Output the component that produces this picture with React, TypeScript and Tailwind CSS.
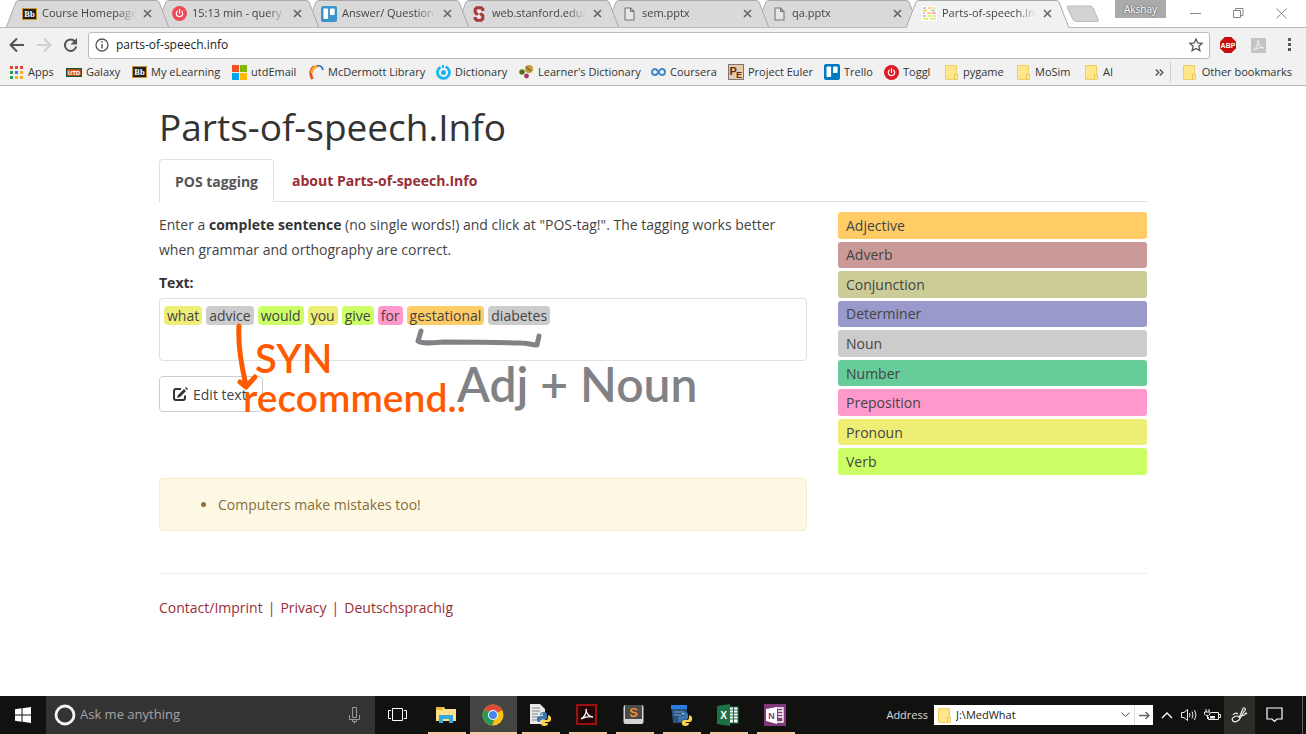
import type { ReactNode } from 'react';

type Fn = () => ReactNode;

/* ---------- Site icons ---------- */

const Blackboard: Fn = () => (
  <svg width="15" height="12" viewBox="0 0 15 12">
    <rect x="0.5" y="0.5" width="14" height="11" fill="#222" stroke="#c9952f" />
    <text x="7.5" y="9" fontSize="8.5" fontWeight="700" textAnchor="middle" fill="#fff" fontFamily="Liberation Serif, serif">Bb</text>
  </svg>
);

const Power = ({ color }: { color: string }) => (
  <svg width="15" height="15" viewBox="0 0 15 15">
    <circle cx="7.5" cy="7.5" r="7.5" fill={color} />
    <path d="M5.3 5.2a3.2 3.2 0 1 0 4.4 0M7.5 3.4v4" fill="none" stroke="#fff" strokeWidth="1.2" strokeLinecap="round" />
  </svg>
);
const TogglSoft: Fn = () => <Power color="#ea4b55" />;
const Toggl: Fn = () => <Power color="#e01b22" />;

const Board = ({ color }: { color: string }) => (
  <svg width="16" height="16" viewBox="0 0 16 16">
    <rect width="16" height="16" rx="2" fill={color} />
    <rect x="2.5" y="2.5" width="4.6" height="10.5" rx="0.8" fill="#fff" />
    <rect x="9" y="2.5" width="4.6" height="6.5" rx="0.8" fill="#fff" />
  </svg>
);
const TrelloSoft: Fn = () => <Board color="#3a95cf" />;
const Trello: Fn = () => <Board color="#0079bf" />;

const Stanford: Fn = () => (
  <svg width="12" height="16" viewBox="0 0 12 16">
    <path d="M9.8 5V3.2L8.3 1.8H3.7L2.2 3.2v3L3.8 8h4.4l1.6 1.6v3.2l-1.5 1.4H3.7l-1.5-1.4V11" fill="none" stroke="#a83a3a" strokeWidth="3" />
    <path d="M6 4v9M5 6.5h3M4 10h3" stroke="#fff" strokeWidth="0.9" />
  </svg>
);

const Page: Fn = () => (
  <svg width="11" height="14" viewBox="0 0 11 14">
    <path d="M1 1h5.5L10 4.5V13H1z M6.5 1v3.5H10" fill="#e6e6e6" stroke="#777" strokeWidth="1.1" />
  </svg>
);

const Pos: Fn = () => (
  <svg width="15" height="15" viewBox="0 0 15 15">
    <rect width="15" height="15" fill="#fff" />
    <path d="M1 2h3M9 4.5h4M1 7h2" stroke="#bbb" strokeWidth="1.6" />
    <path d="M6 2h4M1 4.5h4M5 7h4" stroke="#ffc24d" strokeWidth="1.6" />
    <path d="M11 2h3M6 10h4M1 12.8h5" stroke="#d3f04c" strokeWidth="1.6" />
    <path d="M10 7h4M1 10h3" stroke="#ff8fc4" strokeWidth="1.6" />
    <path d="M11 10h3M8 12.8h6" stroke="#e8e35e" strokeWidth="1.6" />
  </svg>
);

const Apps: Fn = () => (
  <svg width="13" height="13" viewBox="0 0 13 13">
    {['#e04434', '#e04434', '#e04434', '#2ba14b', '#3b7de0', '#f2b01e', '#2ba14b', '#f2b01e', '#f2b01e'].map((c, i) => (
      <rect key={i} x={(i % 3) * 5} y={Math.floor(i / 3) * 5} width="3" height="3" fill={c} />
    ))}
  </svg>
);

const Utd: Fn = () => (
  <svg width="16" height="9" viewBox="0 0 16 9">
    <rect x="0.5" y="0.5" width="15" height="8" rx="1" fill="#d9591f" stroke="#14502d" strokeWidth="1.500" />
    <text x="8" y="6.8" fontSize="6" fontWeight="700" textAnchor="middle" fill="#fff" fontFamily="Liberation Sans, sans-serif">UTD</text>
  </svg>
);

const Microsoft: Fn = () => (
  <svg width="15" height="15" viewBox="0 0 15 15">
    <path d="M0 0h7v7H0z" fill="#f25022" /><path d="M8 0h7v7H8z" fill="#7fba00" />
    <path d="M0 8h7v7H0z" fill="#00a4ef" /><path d="M8 8h7v7H8z" fill="#ffb900" />
  </svg>
);

const Arc: Fn = () => (
  <svg width="15" height="16" viewBox="0 0 15 16">
    <path d="M3.5 15C.2 10 1.500 5 5.300 2.500" fill="none" stroke="#ee4d23" strokeWidth="2.800" />
    <path d="M2.500 9C2.900 5 5.500 2.600 9 2" fill="none" stroke="#fba922" strokeWidth="2.600" />
    <path d="M8 2c3.500-.8 5.500 1.200 6 4" fill="none" stroke="#2d6fb5" strokeWidth="1.600" />
  </svg>
);

const Dictionary: Fn = () => (
  <svg width="15" height="15" viewBox="0 0 15 15">
    <path d="M9.500 1.800A6 6 0 1 1 4.500 2.200" fill="none" stroke="#19b5ee" strokeWidth="2.800" />
    <circle cx="7.500" cy="7.500" r="2.500" fill="#19b5ee" /><path d="M7 0v3" stroke="#19b5ee" strokeWidth="2" />
  </svg>
);

const Learner: Fn = () => (
  <svg width="15" height="14" viewBox="0 0 15 14">
    <circle cx="10" cy="4" r="4" fill="#c39a35" /><circle cx="3" cy="7" r="2.800" fill="#5d7d25" />
    <circle cx="7.500" cy="11" r="2.400" fill="#a23b62" /><path d="M7 2l5 4M1 7h4" stroke="#5a4413" />
  </svg>
);

const Coursera: Fn = () => (
  <svg width="15" height="10" viewBox="0 0 15 10">
    <path d="M7.500 5C6 2.500 5 2 4 2a3 3 0 0 0 0 6c1.500 0 2.500-1 3.500-3s2-3 3.500-3a3 3 0 0 1 0 6C9.800 8 8.800 7.400 7.500 5z" fill="none" stroke="#3f86c8" strokeWidth="1.900" />
  </svg>
);

const Euler: Fn = () => (
  <svg width="16" height="16" viewBox="0 0 16 16">
    <rect x="0.500" y="0.500" width="15" height="15" fill="#e9c9a7" stroke="#777" />
    <text x="1.500" y="10.500" fontSize="11" fontWeight="700" fill="#5b2f14" fontFamily="Liberation Sans, sans-serif">P</text>
    <text x="8" y="14" fontSize="9" fontWeight="700" fill="#5b2f14" fontFamily="Liberation Sans, sans-serif">E</text>
  </svg>
);

const Folder: Fn = () => (
  <svg width="13" height="15" viewBox="0 0 13 15">
    <path d="M.5.500h11v9h1v5H.500z" fill="#ffe58c" stroke="#f0ce62" />
    <path d="M9.500 14V9.500h2.500" fill="none" stroke="#eec254" />
  </svg>
);

/* ---------- Tab strip ---------- */

const tabs: { icon: Fn; title: string }[] = [
  { icon: Blackboard, title: 'Course Homepage' },
  { icon: TogglSoft, title: '15:13 min - query' },
  { icon: TrelloSoft, title: 'Answer/ Question' },
  { icon: Stanford, title: 'web.stanford.edu/' },
  { icon: Page, title: 'sem.pptx' },
  { icon: Page, title: 'qa.pptx' },
  { icon: Pos, title: 'Parts-of-speech.Info' },
];

const zOrder = ['z-[6]', 'z-[5]', 'z-[4]', 'z-[3]', 'z-[2]', 'z-[1]', 'z-10'];

function TabStrip() {
  return (
    <div className="isolate flex h-7 items-stretch border-b border-[#b9b9b9] bg-white pl-3">
      {tabs.map(({ icon: Icon, title }, i) => {
        const active = i === 6;
        return (
          <div key={title} className={`relative flex w-[150px] shrink-0 items-center pr-[10px] pl-[9px] ${zOrder[i]}`}>
            <svg className="absolute top-0 -left-[6px] -z-10" width="164" height="28" viewBox="0 0 164 28">
              <path d="M0 28L10 2Q11 .5 13 .5H150Q152 .5 153 2L163 28" fill={active ? '#f1f1f1' : '#d9d9d9'} stroke="#aaa" />
              {!active && <path d="M0 27.500H164" stroke="#b9b9b9" />}
            </svg>
            <button className="flex min-w-0 flex-1 items-center gap-[5px] text-left text-[11px] text-[#444]">
              <span className="flex w-4 shrink-0 justify-center"><Icon /></span>
              <span className="w-[94px] overflow-hidden whitespace-nowrap [mask-image:linear-gradient(to_right,#000_80%,transparent)]">{title}</span>
            </button>
            <button aria-label={`Close ${title}`} className="shrink-0">
              <svg width="9" height="9" viewBox="0 0 9 9"><path d="M1 1l7 7M8 1L1 8" stroke="#666" strokeWidth="1.600" /></svg>
            </button>
          </div>
        );
      })}
      <button aria-label="New tab" className="ml-1 flex items-center">
        <svg width="34" height="18" viewBox="0 0 34 18"><path d="M1 2Q1 1 2 1H24Q26 1 27 3L32 14Q33 16.500 31 16.500H10Q8 16.500 7 14.500z" fill="#d2d2d2" stroke="#bbb" /></svg>
      </button>
      <div className="ml-auto flex items-start">
        <div className="mr-6 flex h-[18px] w-[51px] items-center justify-center bg-[#aaa] text-[10px] text-white [text-shadow:0_0_2px_#333]">Akshay</div>
        <button aria-label="Minimize" className="mt-2 mr-8"><svg width="11" height="10"><path d="M0 5.500h11" stroke="#888" /></svg></button>
        <button aria-label="Restore" className="mt-2 mr-8">
          <svg width="11" height="10"><path d="M.5 2.500h7v7h-7zM2.500 2.500v-2h7.500v7H7.500" fill="none" stroke="#888" /></svg>
        </button>
        <button aria-label="Close window" className="mt-2 mr-[19px]"><svg width="11" height="11"><path d="M.5.500l10 10M10.500.500l-10 10" stroke="#888" /></svg></button>
      </div>
    </div>
  );
}

/* ---------- Toolbar ---------- */

function Toolbar() {
  return (
    <div className="flex h-[34px] items-center pl-2 text-[#555]">
      <button aria-label="Back" className="flex w-[27px]">
        <svg width="18" height="16" viewBox="0 0 18 16"><path d="M16 8H3M9 1.500L2.500 8 9 14.500" fill="none" stroke="#555" strokeWidth="2" /></svg>
      </button>
      <button aria-label="Forward" className="flex w-[27px]">
        <svg width="18" height="16" viewBox="0 0 18 16"><path d="M2 8h13M9 1.500L15.500 8 9 14.500" fill="none" stroke="#d0d0d0" strokeWidth="2" /></svg>
      </button>
      <button aria-label="Reload" className="flex w-[26px]">
        <svg width="18" height="16" viewBox="0 0 18 16"><path d="M13 4.500A5.700 5.700 0 1 0 14.200 9.500" fill="none" stroke="#555" strokeWidth="2" /><path d="M15 1v6.500H8.500z" fill="#555" /></svg>
      </button>
      <label className="flex h-[27px] flex-1 items-center rounded-[3px] border border-[#bcbcbc] bg-white px-[6px]">
        <svg width="14" height="14" viewBox="0 0 14 14"><circle cx="7" cy="7" r="6" fill="none" stroke="#555" strokeWidth="1.300" /><path d="M7 6v4.500M7 3.200v1.600" stroke="#555" strokeWidth="1.500" /></svg>
        <input aria-label="Address" defaultValue="parts-of-speech.info" className="ml-[7px] min-w-0 flex-1 bg-transparent text-[12px] text-[#222] outline-none" />
        <svg width="14" height="14" viewBox="0 0 14 14"><path d="M7 1l1.800 4 4.400.4-3.300 2.900 1 4.300L7 10.400l-3.900 2.200 1-4.300L.8 5.400 5.200 5z" fill="none" stroke="#555" strokeWidth="1.300" /></svg>
      </label>
      <button aria-label="Adblock Plus" className="ml-[10px]">
        <svg width="16" height="16" viewBox="0 0 16 16"><path d="M4.700 0h6.600L16 4.700v6.600L11.300 16H4.700L0 11.300V4.700z" fill="#c70d0d" /><text x="8" y="10.500" fontSize="7" fontWeight="700" textAnchor="middle" fill="#fff" fontFamily="Liberation Sans, sans-serif">ABP</text></svg>
      </button>
      <button aria-label="Adobe Acrobat" className="ml-[15px]">
        <svg width="15" height="15" viewBox="0 0 15 15"><rect width="15" height="15" fill="#c4c4c4" /><path d="M2.500 12C5 10.500 7.500 6 7 2.500c1 5 3 7.500 5.800 7.500-3-.8-7 0-10.300 2z" fill="none" stroke="#f5f5f5" /></svg>
      </button>
      <button aria-label="Menu" className="mr-[14px] ml-[22px]">
        <svg width="4" height="14" viewBox="0 0 4 14"><path d="M0 0h3v3H0zM0 5h3v3H0zM0 10h3v3H0z" fill="#5a5a5a" /></svg>
      </button>
    </div>
  );
}

const bookmarks: { icon: Fn; name: string; width: string }[] = [
  { icon: Apps, name: 'Apps', width: 'w-[58px]' },
  { icon: Utd, name: 'Galaxy', width: 'w-[65px]' },
  { icon: Blackboard, name: 'My eLearning', width: 'w-[100px]' },
  { icon: Microsoft, name: 'utdEmail', width: 'w-[77px]' },
  { icon: Arc, name: 'McDermott Library', width: 'w-[127px]' },
  { icon: Dictionary, name: 'Dictionary', width: 'w-[83px]' },
  { icon: Learner, name: "Learner's Dictionary", width: 'w-[132px]' },
  { icon: Coursera, name: 'Coursera', width: 'w-[78px]' },
  { icon: Euler, name: 'Project Euler', width: 'w-[96px]' },
  { icon: Trello, name: 'Trello', width: 'w-[59px]' },
  { icon: Toggl, name: 'Toggl', width: 'w-[60px]' },
  { icon: Folder, name: 'pygame', width: 'w-[72px]' },
  { icon: Folder, name: 'MoSim', width: 'w-[68px]' },
  { icon: Folder, name: 'AI', width: 'w-10' },
];

function Bookmarks() {
  return (
    <nav aria-label="Bookmarks" className="flex h-[23px] items-start overflow-hidden pl-2 text-[11px] leading-5 whitespace-nowrap text-[#333]">
      {bookmarks.map(({ icon: Icon, name, width }) => (
        <a key={name} href="#" className={`flex shrink-0 items-center gap-1 ${width}`}>
          <span className="flex w-4 shrink-0 justify-center"><Icon /></span>
          {name}
        </a>
      ))}
      <div className="mr-[14px] ml-auto flex items-center">
        <button aria-label="More bookmarks" className="mr-[6px]">
          <svg width="9" height="7" viewBox="0 0 9 7"><path d="M.8.5l3 3-3 3M4.800.5l3 3-3 3" fill="none" stroke="#555" strokeWidth="1.400" /></svg>
        </button>
        <a href="#" className="flex items-center gap-[6px] border-l border-[#ccc] pl-3"><Folder />Other bookmarks</a>
      </div>
    </nav>
  );
}

/* ---------- Page ---------- */

const words: [string, string][] = [
  ['what', 'bg-[#eeee77]'],
  ['advice', 'bg-[#cccccc]'],
  ['would', 'bg-[#ccff66]'],
  ['you', 'bg-[#eeee77]'],
  ['give', 'bg-[#ccff66]'],
  ['for', 'bg-[#ff99cc]'],
  ['gestational', 'bg-[#ffcc66]'],
  ['diabetes', 'bg-[#cccccc]'],
];

const legend: [string, string][] = [
  ['Adjective', 'bg-[#ffcc66]'],
  ['Adverb', 'bg-[#cc9999]'],
  ['Conjunction', 'bg-[#cccc99]'],
  ['Determiner', 'bg-[#9999cc]'],
  ['Noun', 'bg-[#cccccc]'],
  ['Number', 'bg-[#66cc99]'],
  ['Preposition', 'bg-[#ff99cc]'],
  ['Pronoun', 'bg-[#eeee77]'],
  ['Verb', 'bg-[#ccff66]'],
];

function Ink() {
  return (
    <div className="pointer-events-none absolute top-0 left-0 font-['Lato',sans-serif] leading-none font-semibold whitespace-nowrap">
      <svg className="absolute top-0 left-0" width="400" height="100" viewBox="0 0 400 100" fill="none" strokeLinecap="round" strokeLinejoin="round">
        <path d="M80 28C79 43 82 66 87 87M81 84l6 5 9-10" stroke="#ff5a00" strokeWidth="5" />
        <path d="M262 33c-1 4-2 7-3 10 4 3 13 2 25 1 20 0 48 0 78 1 7 0 10 2 16 2l2-9" stroke="#808285" strokeWidth="5" />
      </svg>
      <span className="absolute top-10 left-24 text-[40px] text-[#ff5a00]">SYN</span>
      <span className="absolute top-20 left-[84px] text-[39px] text-[#ff5a00]">recommend..</span>
      <span className="absolute top-[62px] left-[298px] text-[48px] text-[#808285]">Adj + Noun</span>
    </div>
  );
}

function Content() {
  return (
    <main className="mx-auto w-full max-w-[988px] flex-1 text-[14px] leading-[25px] text-[#444]">
      <h1 className="pt-4 text-[37px] leading-[50px] text-[#333]">Parts-of-speech.Info</h1>
      <div role="tablist" className="mt-[7px] flex border-b border-[#e0e0e0] font-bold">
        <button role="tab" aria-selected="true" className="-mb-px h-[43px] rounded-t border border-b-0 border-[#e0e0e0] bg-white px-[15px] text-[#555]">POS tagging</button>
        <button role="tab" aria-selected="false" className="ml-[2px] px-4 text-[#982e35]">about Parts-of-speech.Info</button>
      </div>
      <div className="flex gap-[31px] pt-[10px]">
        <div className="min-w-0 flex-1">
          <p>
            Enter a <b className="text-[#333]">complete sentence</b> (no single words!) and click at "POS-tag!". The tagging works better when grammar and orthography are correct.
          </p>
          <h2 className="mt-2 font-bold text-[#333]">Text:</h2>
          <div className="relative mt-[3px]">
            <div className="flex min-h-[63px] flex-wrap items-start gap-1 rounded border border-[#e0e0e0] px-1 py-[7px] leading-[19px] text-[#444]">
              {words.map(([word, color]) => <span key={word} className={`rounded-sm px-[3px] ${color}`}>{word}</span>)}
            </div>
            <button className="mt-[15px] flex h-9 items-center gap-[5px] rounded border border-[#ccc] bg-white pr-[15px] pl-3 text-[#444]">
              <svg width="16" height="15" viewBox="0 0 16 15"><path d="M9 2H4Q2 2 2 4v7q0 2 2 2h7q2 0 2-2V8.500" fill="none" stroke="#333" strokeWidth="2" /><path d="M6 8l6-6 2 2-6 6-3 1zM13 1l1-1 2 2-1 1z" fill="#333" /></svg>
              Edit text
            </button>
            <Ink />
          </div>
          <ul className="mt-[66px] list-disc rounded border border-[#faebcc] bg-[#fcf8e3] py-[13px] pl-[58px] text-[#8a6d3b]">
            <li>Computers make mistakes too!</li>
          </ul>
        </div>
        <ul className="grid min-h-[263px] w-[309px] shrink-0 auto-rows-fr gap-[3px] self-start">
          {legend.map(([name, color]) => <li key={name} className={`flex items-center rounded-[3px] px-2 ${color}`}>{name}</li>)}
        </ul>
      </div>
      <footer className="mt-[42px] flex gap-[5px] border-t border-[#eee] pt-[21px] text-[#982e35]">
        <a href="#">Contact/Imprint</a><span>|</span><a href="#">Privacy</a><span>|</span><a href="#">Deutschsprachig</a>
      </footer>
    </main>
  );
}

/* ---------- Taskbar ---------- */

const Python = () => (
  <g>
    <path d="M11 11q0-3 3.500-3t3.500 3v2.500q0 2-2 2h-3q-2 0-2 2.500H9.500q-2-.5-1.500-4 .5-2 2.500-2H14v-1z" fill="#3b76ad" />
    <path d="M19 11.500h1.500q2 1 1.500 4.500-.5 2-2.500 2H15.500v1H19q0 3-3.500 3T12 19.500V18q0-2 2-2h3q2 0 2-2.500z" fill="#ffd343" />
    <circle cx="13" cy="9.800" r="0.700" fill="#fff" />
  </g>
);

const apps: { name: string; art: ReactNode }[] = [
  { name: 'File Explorer', art: <><path d="M1 3h8l1 2h11v12H1z" fill="#ffe08a" /><path d="M1 3h7v3H1z" fill="#e8b840" /><path d="M4 19v-8h14v8h-4v-4H8v4z" fill="#36a9e1" /></> },
  { name: 'Chrome', art: <><circle cx="11" cy="11" r="10.500" fill="#fbc116" /><path d="M11 11L2 5.500A10.500 10.500 0 0 1 20.300 6z" fill="#dd4b3e" /><path d="M2 5.500L11 11l2 3-3 7.400A10.500 10.500 0 0 1 2 5.500z" fill="#279b56" /><circle cx="11" cy="11" r="5" fill="#fff" /><circle cx="11" cy="11" r="4" fill="#4587f3" /></> },
  { name: 'Python', art: <><path d="M1 0h10l5 5v15H1z" fill="#e7e7e7" /><path d="M3 4h8M3 7h8M3 10h6M3 13h6M3 16h6" stroke="#888" /><Python /></> },
  { name: 'Adobe Reader', art: <><rect x="1" y="1" width="19" height="19" fill="#250606" stroke="#c7140f" strokeWidth="1.500" /><path d="M5 15c3-1.500 6-6 5-10 0 4 3 8 7 8-4-.8-8 0-12 2z" fill="none" stroke="#fff" strokeWidth="1.300" /></> },
  { name: 'Sublime Text', art: <><rect x="0.500" y="1" width="20" height="19" rx="2" fill="#d5d5d5" /><rect x="2" y="1" width="17" height="14" rx="1" fill="#4a4a4a" /><text x="10.500" y="12.500" fontSize="13" fontWeight="700" textAnchor="middle" fill="#f29127" fontFamily="Liberation Sans, sans-serif">S</text></> },
  { name: 'Python Editor', art: <><path d="M1 1h16v18H3z" fill="#29517c" /><path d="M1 1h16v4H1z" fill="#2a7de1" /><path d="M4 8h10M4 11h7" stroke="#7ba5d5" /><Python /></> },
  { name: 'Excel', art: <><rect x="11" y="3" width="10" height="16" fill="#fff" stroke="#217346" /><path d="M11 6h10M11 9h10M11 12h10M11 15h10M16.500 3v16" stroke="#217346" strokeWidth="1.200" /><path d="M0 2l13-2v22L0 20z" fill="#1e7145" /><text x="6.500" y="14.500" fontSize="10" fontWeight="700" textAnchor="middle" fill="#fff" fontFamily="Liberation Sans, sans-serif">X</text></> },
  { name: 'OneNote', art: <><rect width="22" height="22" fill="#80397b" /><path d="M12 4h7v14h-7zM14 7h5M14 10h5M14 13h5" fill="none" stroke="#fff" strokeWidth="1.300" /><path d="M2 5l11-2v17L2 17z" fill="#fff" /><text x="7.500" y="14.500" fontSize="9" fontWeight="700" textAnchor="middle" fill="#80397b" fontFamily="Liberation Sans, sans-serif">N</text></> },
];

function Taskbar() {
  return (
    <footer className="flex h-[38px] items-stretch bg-[#11120f] text-white">
      <button aria-label="Start" className="flex w-[46px] items-center justify-center">
        <svg width="16" height="16" viewBox="0 0 16 16"><path d="M0 2.200l6.500-.9v6.200H0zM7.500 1.200L16 0v7.500H7.500zM0 8.500h6.500v6.200L0 13.800zM7.500 8.500H16V16l-8.500-1.200z" fill="#fff" /></svg>
      </button>
      <label className="flex w-[329px] items-center bg-[#333] pr-[15px] pl-2">
        <svg width="22" height="22" viewBox="0 0 22 22"><circle cx="11" cy="11" r="9" fill="none" stroke="#f5f5f5" strokeWidth="2.800" /></svg>
        <input aria-label="Search" placeholder="Ask me anything" className="ml-1 min-w-0 flex-1 bg-transparent text-[13px] outline-none placeholder:text-[#a5a5a5]" />
        <svg width="11" height="17" viewBox="0 0 11 17"><path d="M3.500.500h4v10h-4zM.5 8v4.500h10V8M3.500 12.500v2h4v-2M5.500 14v2.500" fill="none" stroke="#999" /></svg>
      </label>
      <button aria-label="Task view" className="flex w-12 items-center justify-center pr-1">
        <svg width="19" height="14" viewBox="0 0 19 14"><path d="M4.500.500h10v12h-10zM3 2.500H.5v8H3M16 2.500h2.500v8H16" fill="none" stroke="#fff" /></svg>
      </button>
      {apps.map(({ name, art }) => (
        <button key={name} aria-label={name} className={`flex w-[47px] flex-col items-center ${name === 'Chrome' ? 'bg-[#444543]' : ''}`}>
          <svg className="mt-2" width="23" height="22" viewBox="0 0 23 22">{art}</svg>
          <span className={`mt-auto h-[2px] bg-[#f3c8a2] ${name === 'Chrome' ? 'w-full' : 'w-[38px]'}`} />
        </button>
      ))}
      <div className="ml-auto flex items-center">
        <label htmlFor="folder-path" className="mr-[6px] text-[11px] text-[#ddd]">Address</label>
        <div className="flex h-5 w-[219px] items-center bg-white pl-1">
          <Folder />
          <input id="folder-path" defaultValue="J:\MedWhat" className="ml-[5px] min-w-0 flex-1 text-[11px] text-[#222] outline-none" />
          <button aria-label="Show history" className="mr-1"><svg width="9" height="6"><path d="M.5.500l4 4 4-4" fill="none" stroke="#555" /></svg></button>
          <button aria-label="Go" className="flex h-full w-[19px] items-center justify-center border-l border-[#ddd]"><svg width="11" height="9"><path d="M0 4.500h10M6.500 1L10 4.500 6.500 8" fill="none" stroke="#666" strokeWidth="1.400" /></svg></button>
        </div>
        <button aria-label="Show hidden icons" className="ml-2"><svg width="12" height="8"><path d="M1 7l5-5 5 5" fill="none" stroke="#fff" strokeWidth="1.300" /></svg></button>
        <button aria-label="Volume" className="ml-2"><svg width="17" height="14" viewBox="0 0 17 14"><path d="M.5 4.500H3L6.500 1.500v11L3 9.500H.500zM8.500 5q1 2 0 4M11 3.500q2 3.500 0 7M13.500 2q3 5 0 10" fill="none" stroke="#eee" /></svg></button>
        <button aria-label="Battery" className="mr-[3px] ml-[6px]"><svg width="17" height="13" viewBox="0 0 17 13"><path d="M7 3.500h7.500v7H4.500V8M15 5.500h1.500v3H15M2 0v3M5 0v3M.5 3h5.500v2L4.500 6.500H2L.5 5zM3.500 6.500V10" fill="none" stroke="#eee" /><path d="M6 7h5v2.500H6z" fill="#eee" /></svg></button>
        <button aria-label="Ink workspace" className="flex h-full w-[31px] items-center justify-center bg-[#2b2d29]"><svg width="17" height="16" viewBox="0 0 17 16"><path d="M8 11L12 1.500q1-1.500 2 0t-1 3L8 13Q4 16 2 14t1-4 5 0M7 7Q4 5 2 8M10 9q3 0 5-3l1 1" fill="none" stroke="#eee" strokeWidth="1.200" /></svg></button>
        <button aria-label="Notifications" className="mr-[19px] ml-[11px]"><svg width="17" height="16" viewBox="0 0 17 16"><path d="M1 1h15v11h-5l-2.500 2.500L6 12H1z" fill="none" stroke="#fff" strokeWidth="1.200" /></svg></button>
        <span className="h-full w-1 border-l border-[#666]" />
      </div>
    </footer>
  );
}

export default function App() {
  return (
    <div className="flex min-h-screen flex-col overflow-x-hidden bg-white font-['Open_Sans','Noto_Sans',sans-serif]">
      <header className="border-b border-[#b9b9b9] bg-[#f1f1f1]">
        <TabStrip />
        <Toolbar />
        <Bookmarks />
      </header>
      <Content />
      <Taskbar />
    </div>
  );
}
